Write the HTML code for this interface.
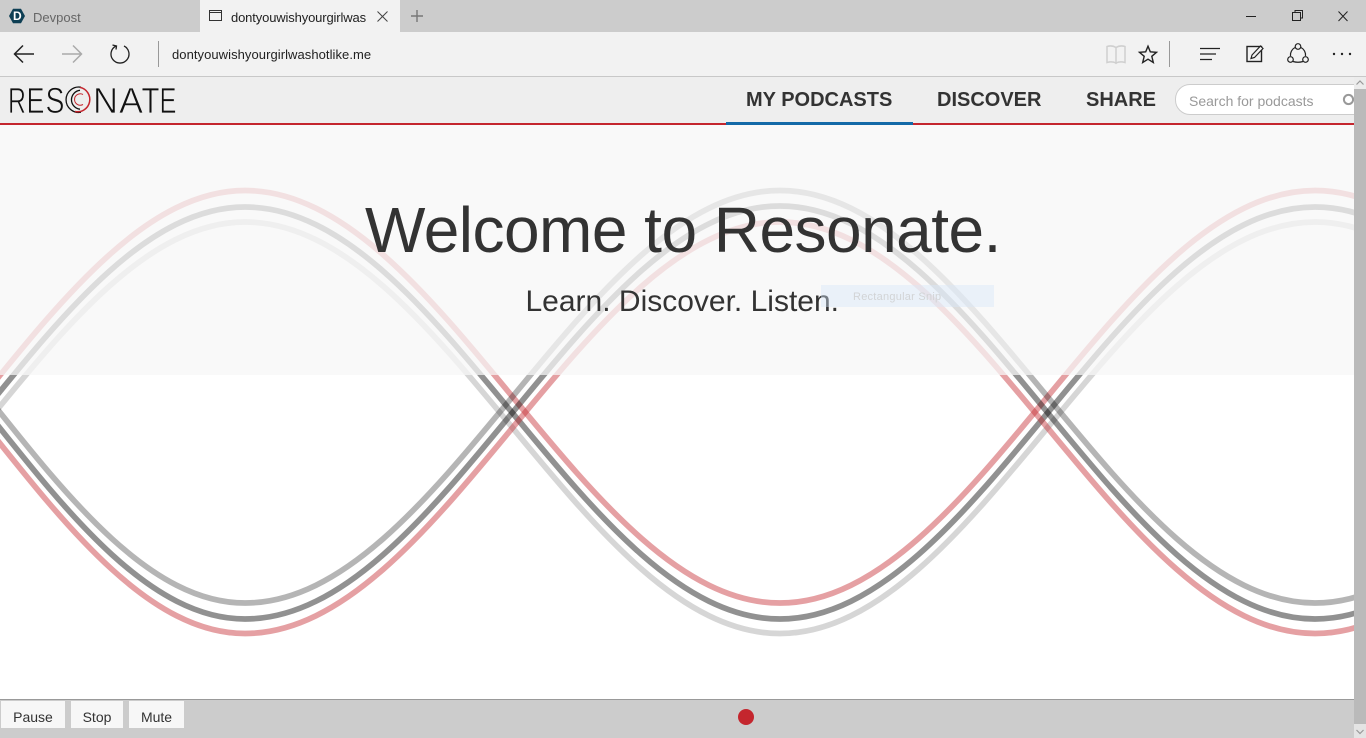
<!DOCTYPE html>
<html lang="en">
<head>
<meta charset="utf-8">
<title>Resonate</title>
<style>
html,body{margin:0;padding:0;width:1366px;height:738px;overflow:hidden;background:#fff;font-family:"Liberation Sans",Arial,sans-serif;}
div,span,a,svg,button{position:absolute;box-sizing:border-box;}
.t{white-space:nowrap;line-height:1;}
svg{overflow:visible;}
.chrome{font-size:13px;}
.btn{top:701px;height:27px;background:#f7f7f7;color:#333;font-size:14px;text-align:center;line-height:32px;}
.nav{top:90px;font-size:20px;font-weight:bold;color:#333;line-height:20px;white-space:nowrap;}
</style>
</head>
<body>
<!-- page -->
<div style="left:0;top:125px;width:1354px;height:575px;background:#fff;"></div>
<svg style="left:0;top:0;" width="1354" height="738" viewBox="0 0 1354 738" fill="none" stroke-width="5.700">
<path stroke="rgba(196,38,46,.44)" d="M-280 603C-88.800 603 53.800 190.500 245 190.500C439.800 190.500 585.200 603 780 603C974.800 603 1120.200 190.500 1315 190.500C1509.800 190.500 1655.200 603 1850 603"/>
<path stroke="rgba(0,0,0,.43)" d="M-280 619C-88.800 619 53.800 207 245 207C439.800 207 585.200 619 780 619C974.800 619 1120.200 207 1315 207C1509.800 207 1655.200 619 1850 619"/>
<path stroke="rgba(0,0,0,.16)" d="M-280 633.500C-88.800 633.500 53.800 222 245 222C439.800 222 585.200 633.500 780 633.500C974.800 633.500 1120.200 222 1315 222C1509.800 222 1655.200 633.500 1850 633.500"/>
<path stroke="rgba(0,0,0,.29)" d="M-270 190.500C-82.400 190.500 57.400 603 245 603C439.800 603 585.200 190.500 780 190.500C974.800 190.500 1120.200 603 1315 603C1509.800 603 1655.200 190.500 1850 190.500"/>
<path stroke="rgba(0,0,0,.43)" d="M-270 206C-82.400 206 57.400 619 245 619C439.800 619 585.200 206 780 206C974.800 206 1120.200 619 1315 619C1509.800 619 1655.200 206 1850 206"/>
<path stroke="rgba(196,38,46,.44)" d="M-270 222C-82.400 222 57.400 633.500 245 633.500C439.800 633.500 585.200 222 780 222C974.800 222 1120.200 633.500 1315 633.500C1509.800 633.500 1655.200 222 1850 222"/>
</svg>
<div style="left:0;top:125px;width:1354px;height:250px;background:rgba(247,247,247,.74);"></div>
<div class="t" style="left:365px;top:194px;font-size:64px;line-height:72px;color:#333;letter-spacing:-.52px;">Welcome to Resonate.</div>
<div class="t" style="left:525.500px;top:284.500px;font-size:30px;line-height:34px;color:#333;">Learn. Discover. Listen.</div>
<div style="left:821px;top:285px;width:173px;height:22px;background:rgba(214,232,250,.42);"></div>
<div class="t" style="left:853px;top:291px;font-size:11px;line-height:13px;color:#d2d4d6;letter-spacing:.25px;">Rectangular Snip</div>

<!-- site header -->
<div style="left:0;top:77px;width:1354px;height:46px;background:#eee;"></div>
<div style="left:0;top:123px;width:1354px;height:2px;background:#c4262e;"></div>
<div style="left:726px;top:122px;width:187px;height:3px;background:#146aa8;"></div>
<svg style="left:0;top:77px;" width="190" height="46" viewBox="0 0 190 46">
<g font-family="'Liberation Sans',sans-serif" font-size="36" fill="#111" stroke="#eee" stroke-width=".8" style="paint-order:fill stroke">
<text x="8" y="36" textLength="18" lengthAdjust="spacingAndGlyphs">R</text>
<text x="26.500" y="36" textLength="18" lengthAdjust="spacingAndGlyphs">E</text>
<text x="45.500" y="36" textLength="19" lengthAdjust="spacingAndGlyphs">S</text>
<text x="93" y="36" textLength="25" lengthAdjust="spacingAndGlyphs">N</text>
<text x="119" y="36" textLength="24" lengthAdjust="spacingAndGlyphs">A</text>
<text x="141.500" y="36" textLength="18" lengthAdjust="spacingAndGlyphs">T</text>
<text x="159.500" y="36" textLength="17" lengthAdjust="spacingAndGlyphs">E</text>
</g>
<g fill="none">
<path d="M81 10.200A12.700 12.700 0 1 0 81 35.200" stroke="#111" stroke-width="1.300"/>
<path d="M80 13.300A9.500 9.500 0 0 0 80 32.200" stroke="#111" stroke-width="1.300"/>
<path d="M80 10.400A12.300 12.300 0 0 1 75 34.500" stroke="#c4262e" stroke-width="1.500"/>
<path d="M83 17.500A5.700 5.700 0 1 0 83 27.500" stroke="#c4262e" stroke-width="1"/>
</g>
</svg>
<div class="nav" style="left:746px;">MY PODCASTS</div>
<div class="nav" style="left:937px;">DISCOVER</div>
<div class="nav" style="left:1086px;">SHARE</div>
<div style="left:1175px;top:84px;width:200px;height:31px;background:#fff;border:1px solid #ccc;border-radius:15px;"></div>
<div class="t" style="left:1189px;top:93px;font-size:14px;line-height:16px;color:#999;">Search for podcasts</div>
<svg style="left:1342px;top:93px;" width="12" height="14" fill="none" stroke="#999" stroke-width="2"><circle cx="6.500" cy="6.500" r="4.600"/></svg>

<!-- footer bar -->
<div style="left:0;top:699px;width:1354px;height:39px;background:#ccc;border-top:1px solid #999;"></div>
<div class="btn" style="left:1px;width:64px;">Pause</div>
<div class="btn" style="left:71px;width:52px;">Stop</div>
<div class="btn" style="left:129px;width:55px;">Mute</div>
<div style="left:738px;top:709px;width:16px;height:16px;border-radius:50%;background:#c4262e;"></div>

<!-- scrollbar -->
<div style="left:1354px;top:77px;width:12px;height:661px;background:#bababa;"></div>
<div style="left:1354px;top:77px;width:12px;height:12px;background:#ececec;"></div>
<div style="left:1354px;top:724px;width:12px;height:14px;background:#e4e4e4;"></div>
<svg style="left:1354px;top:77px;" width="12" height="661" fill="none" stroke="#999" stroke-width="1.200"><path d="M2.500 7.500L6 4L9.500 7.500"/><path d="M2.500 653L6 656.500L9.500 653"/></svg>

<!-- browser chrome -->
<div style="left:0;top:0;width:1366px;height:32px;background:#ccc;"></div>
<div style="left:200px;top:0;width:200px;height:32px;background:#f2f2f2;"></div>
<div style="left:0;top:32px;width:1366px;height:44px;background:#f2f2f2;"></div>
<div style="left:0;top:76px;width:1366px;height:1px;background:#c8c8c8;"></div>

<svg style="left:9px;top:8px;" width="16" height="16" viewBox="0 0 16 16"><path d="M4 .8H12L16 8L12 15.200H4L0 8Z" fill="#0e3f54"/></svg>
<div class="t" style="left:13px;top:9.500px;font-size:12px;line-height:13px;font-weight:bold;color:#fff;">D</div>
<div class="t chrome" style="left:33px;top:11px;line-height:14px;color:#666;">Devpost</div>
<svg style="left:209px;top:9px;" width="14" height="13" fill="none" stroke="#333" stroke-width="1"><path d="M.5 1.500H12.500V11.500H.5ZM.5 3.500H12.500"/></svg>
<div class="t chrome" style="left:231px;top:11px;line-height:14px;color:#222;letter-spacing:-.14px;">dontyouwishyourgirlwas</div>
<svg style="left:377px;top:11px;" width="11" height="11" fill="none" stroke="#444" stroke-width="1"><path d="M.5.5L10.500 10.500M10.500.5L.5 10.500"/></svg>
<svg style="left:411px;top:10px;" width="12" height="12" fill="none" stroke="#777" stroke-width="1.400"><path d="M6 0V12M0 6H12"/></svg>

<svg style="left:1240px;top:8px;" width="115" height="16" fill="none" stroke="#222" stroke-width="1"><path d="M6 8.500H16"/><path d="M52.500 4.500H60.500V12.500H52.500ZM55 4V2.500H62.500V10H61"/><path d="M98.500 3.500L107.500 13M107.500 3.500L98.500 13"/></svg>

<svg style="left:0;top:32px;" width="170" height="44" fill="none">
<path d="M15 22H34M23 13.500L14.500 22L23 30.500" stroke="#222" stroke-width="1.500"/>
<path d="M81 22H62M73 13.500L81.500 22L73 30.500" stroke="#aaa" stroke-width="1.500"/>
<path d="M116 14A9 9 0 1 0 124 14M112.500 13L116.500 14L116 17.500" stroke="#222" stroke-width="1.300"/>
<path d="M158.500 9V35" stroke="#999" stroke-width="1"/>
</svg>
<div class="t chrome" style="left:172px;top:48px;line-height:14px;color:#222;letter-spacing:.06px;">dontyouwishyourgirlwashotlike.me</div>

<svg style="left:1100px;top:32px;" width="266" height="44" fill="none">
<path d="M7 14.500Q12 13 16 15.500V31Q12 29 7 30.500ZM16 15.500Q20 13 25 14.500V30.500Q20 29 16 31Z" stroke="#cfcfcf" stroke-width="1.500"/>
<path d="M48 14.200L50.300 19.800L56.500 20.300L51.800 24.300L53.300 30.500L48 27.200L42.700 30.500L44.200 24.300L39.500 20.300L45.700 19.800Z" stroke="#222" stroke-width="1.400"/>
<path d="M69.500 9V35" stroke="#999" stroke-width="1"/>
<path d="M100 16.500H120M100 22H116M100 27.500H112" stroke="#222" stroke-width="1.300"/>
<rect x="147" y="14.500" width="14.500" height="15" stroke="#222" stroke-width="1.400"/>
<path d="M151 26.500L152 23L160.500 14L163 16.500L154.500 25.500Z" stroke="#222" fill="#f2f2f2" stroke-width="1.200"/>
<path d="M195 15.500A8.500 8.500 0 0 0 190.500 24M201 15.500A8.500 8.500 0 0 1 205.500 24M193 29.500Q198 31 203 29.500" stroke="#222" stroke-width="1.200"/>
<circle cx="198" cy="14.500" r="2.800" stroke="#222" stroke-width="1.200"/>
<circle cx="190.500" cy="27.500" r="2.800" stroke="#222" stroke-width="1.200"/>
<circle cx="205.500" cy="27.500" r="2.800" stroke="#222" stroke-width="1.200"/>
<circle cx="234" cy="22" r="1.200" fill="#222"/><circle cx="242" cy="22" r="1.200" fill="#222"/><circle cx="250" cy="22" r="1.200" fill="#222"/>
</svg>
</body>
</html>
